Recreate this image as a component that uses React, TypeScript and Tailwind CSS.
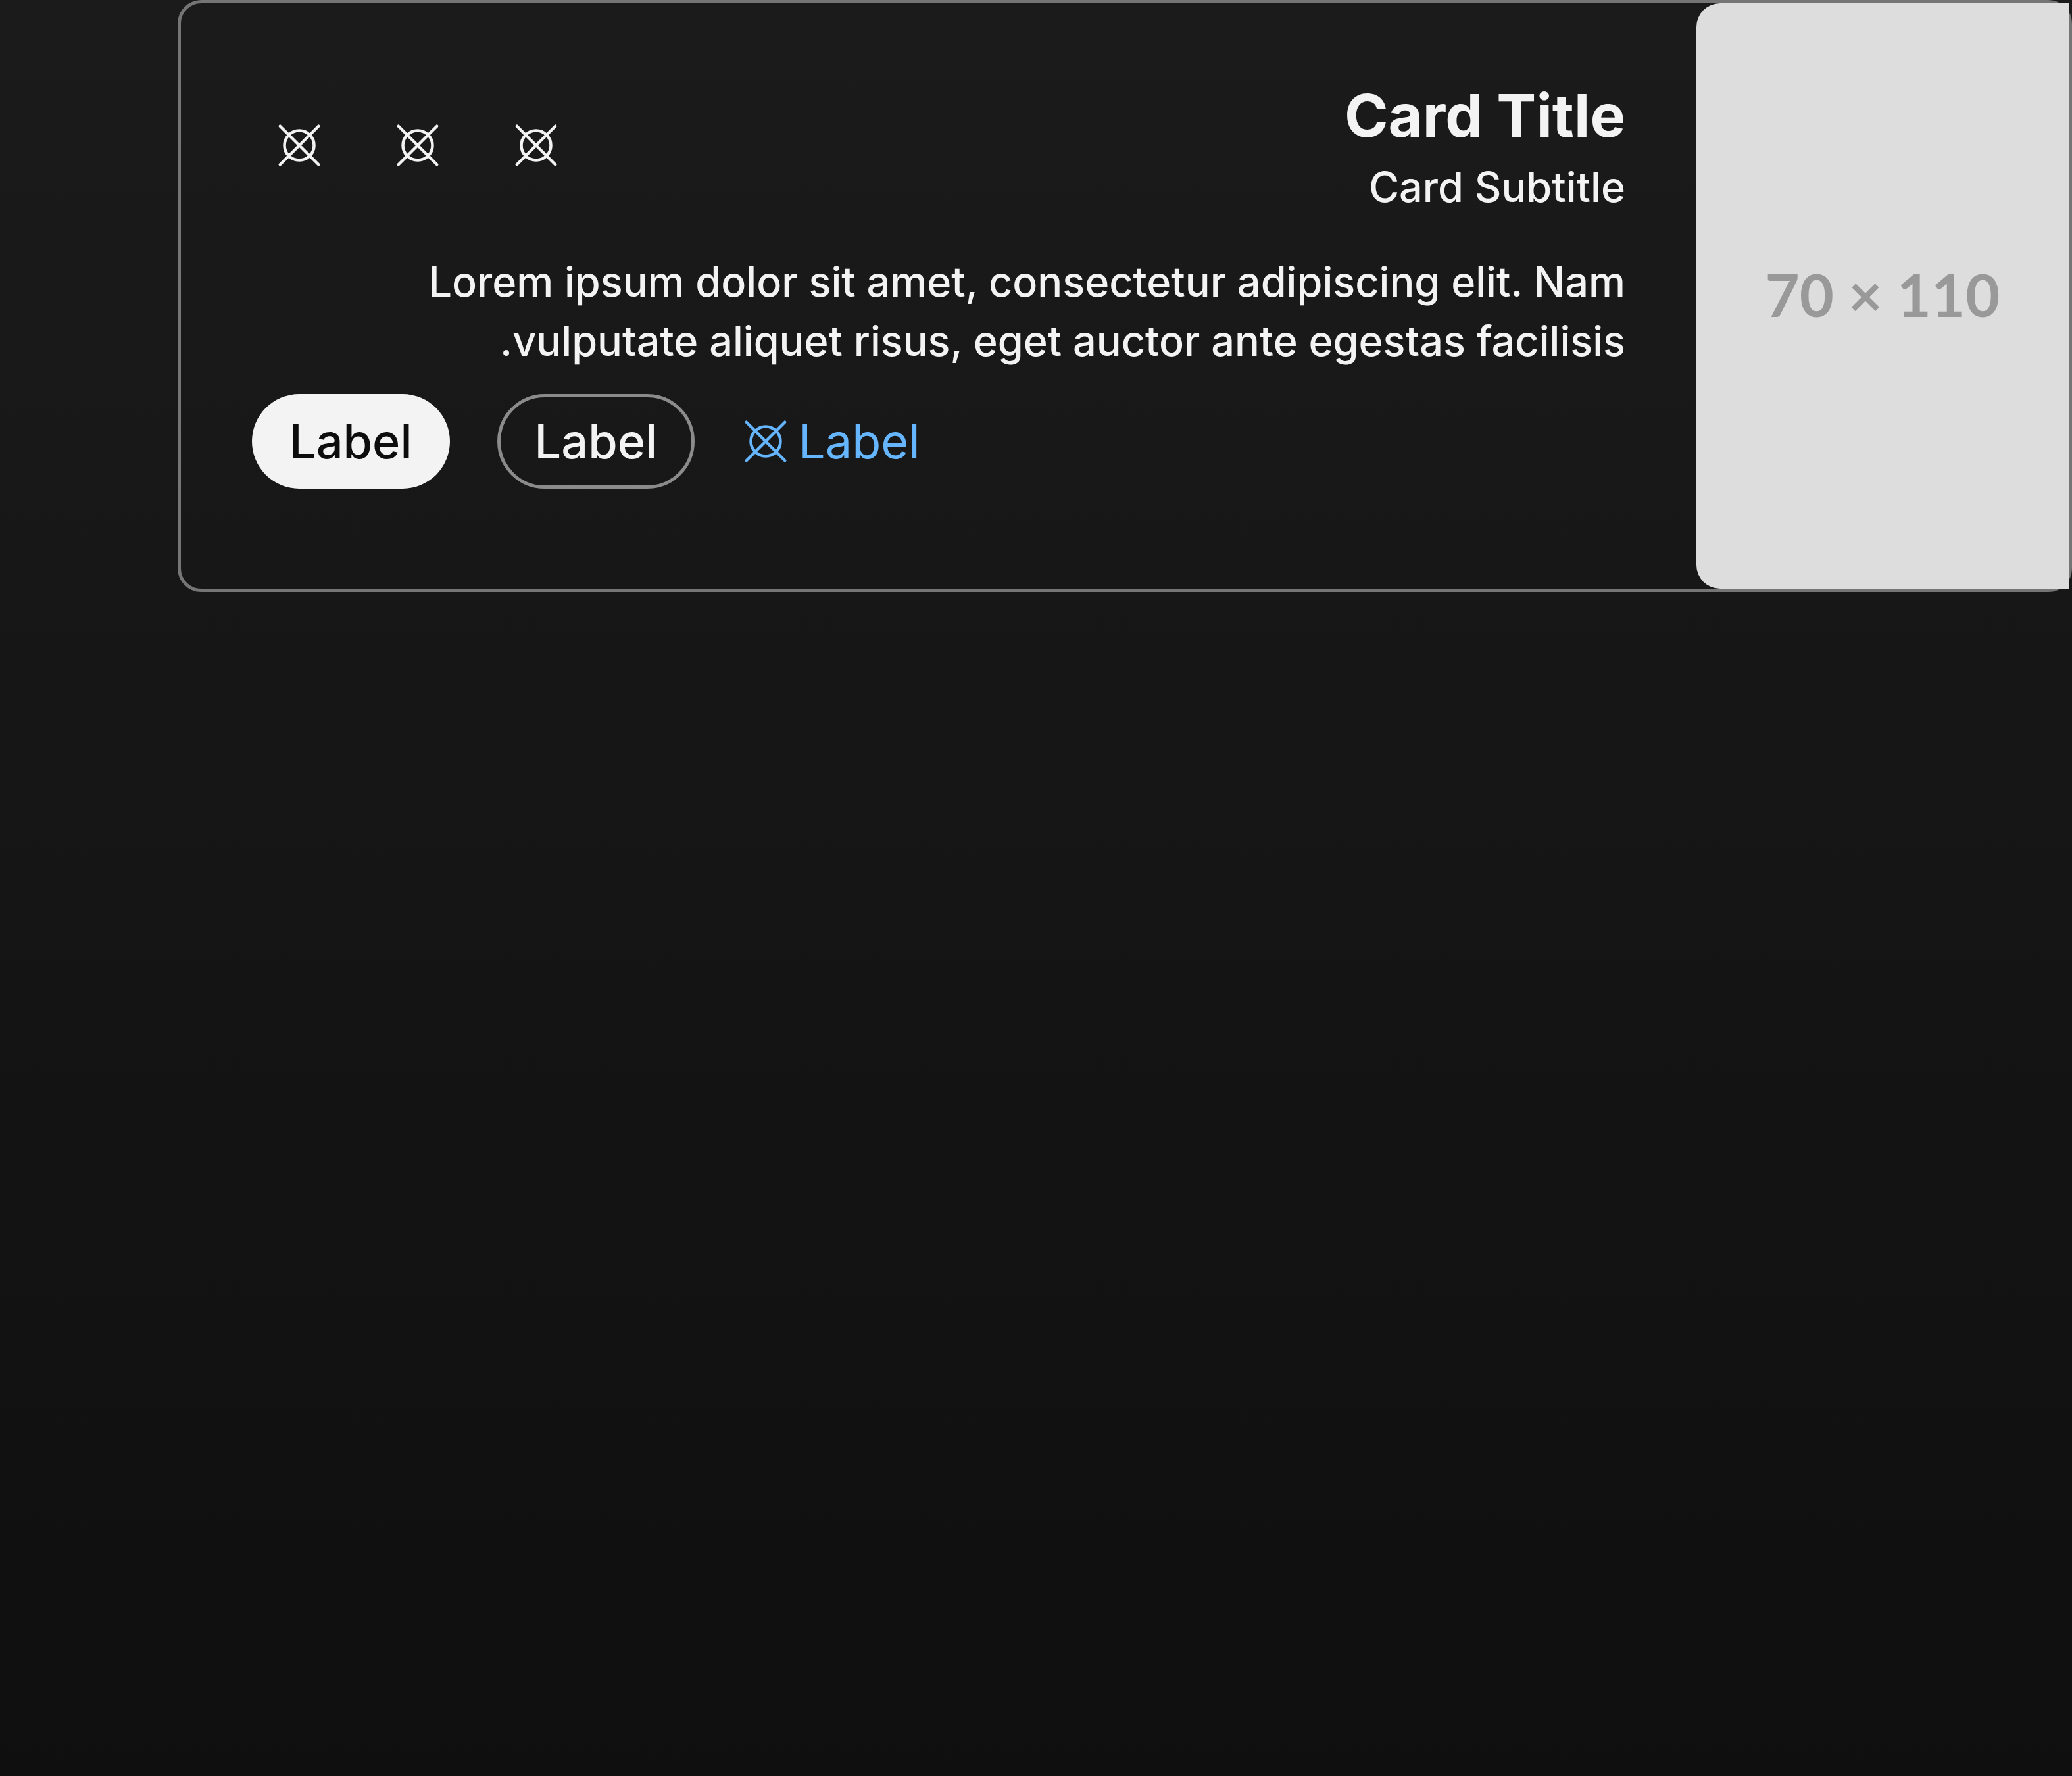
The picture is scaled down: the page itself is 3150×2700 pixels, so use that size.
import React from "react";

function PlaceholderIcon() {
  return (
    <svg
      viewBox="0 0 16 16"
      className="size-[72px] shrink-0"
      fill="none"
      stroke="currentColor"
      strokeWidth="1"
      strokeLinecap="round"
      aria-hidden="true"
    >
      <circle cx="8" cy="8" r="5" />
      <path d="M1.5 1.5 14.5 14.5M14.5 1.5 1.5 14.5" />
    </svg>
  );
}

const actions = ["First action", "Second action", "Third action"];

export default function App() {
  return (
    <main className="min-h-screen bg-linear-to-b from-[#1b1b1b] to-[#0f0f0f] pl-[270px] font-['Inter',sans-serif] text-[#f3f3f3] [font-optical-sizing:none]">
      <article
        dir="rtl"
        className="flex min-h-[900px] rounded-[36px] border-5 border-[#757575]"
      >
        <div
          role="img"
          aria-label="70 × 110"
          className="flex w-[566px] shrink-0 items-center justify-center rounded-l-[36px] bg-[#dddddd] pb-1.5 font-['Lato',sans-serif] text-[90px] font-bold text-[#999999]"
        >
          <span dir="ltr">70 × 110</span>
        </div>

        <div className="min-w-0 flex-1 p-[108px]">
          <header className="flex items-center justify-between">
            <div>
              <h2 className="text-[90px] leading-[126px] font-bold [font-variation-settings:'opsz'_20]">
                Card Title
              </h2>
              <p className="text-[63px] leading-[90px] font-medium">Card Subtitle</p>
            </div>
            <div className="flex gap-9">
              {actions.map((label) => (
                <button
                  key={label}
                  type="button"
                  aria-label={label}
                  className="flex size-36 items-center justify-center rounded-full"
                >
                  <PlaceholderIcon />
                </button>
              ))}
            </div>
          </header>

          <p className="mt-[54px] text-[63px] leading-[90px] font-medium">
            Lorem ipsum dolor sit amet, consectetur adipiscing elit. Nam
            vulputate aliquet risus, eget auctor ante egestas facilisis.
          </p>

          <footer
            dir="ltr"
            className="mt-9 flex items-center gap-[72px] text-[72px] leading-[90px] [font-variation-settings:'opsz'_16]"
          >
            <button
              type="button"
              className="h-36 rounded-full bg-[#f3f3f3] px-[57px] font-medium text-[#0d0d0d]"
            >
              Label
            </button>
            <button
              type="button"
              className="h-36 rounded-full border-5 border-[#8b8b8b] px-[52px] font-medium"
            >
              Label
            </button>
            <a href="#" className="flex items-center gap-[14px] text-[#66b5ff]">
              <PlaceholderIcon />
              Label
            </a>
          </footer>
        </div>
      </article>
    </main>
  );
}
